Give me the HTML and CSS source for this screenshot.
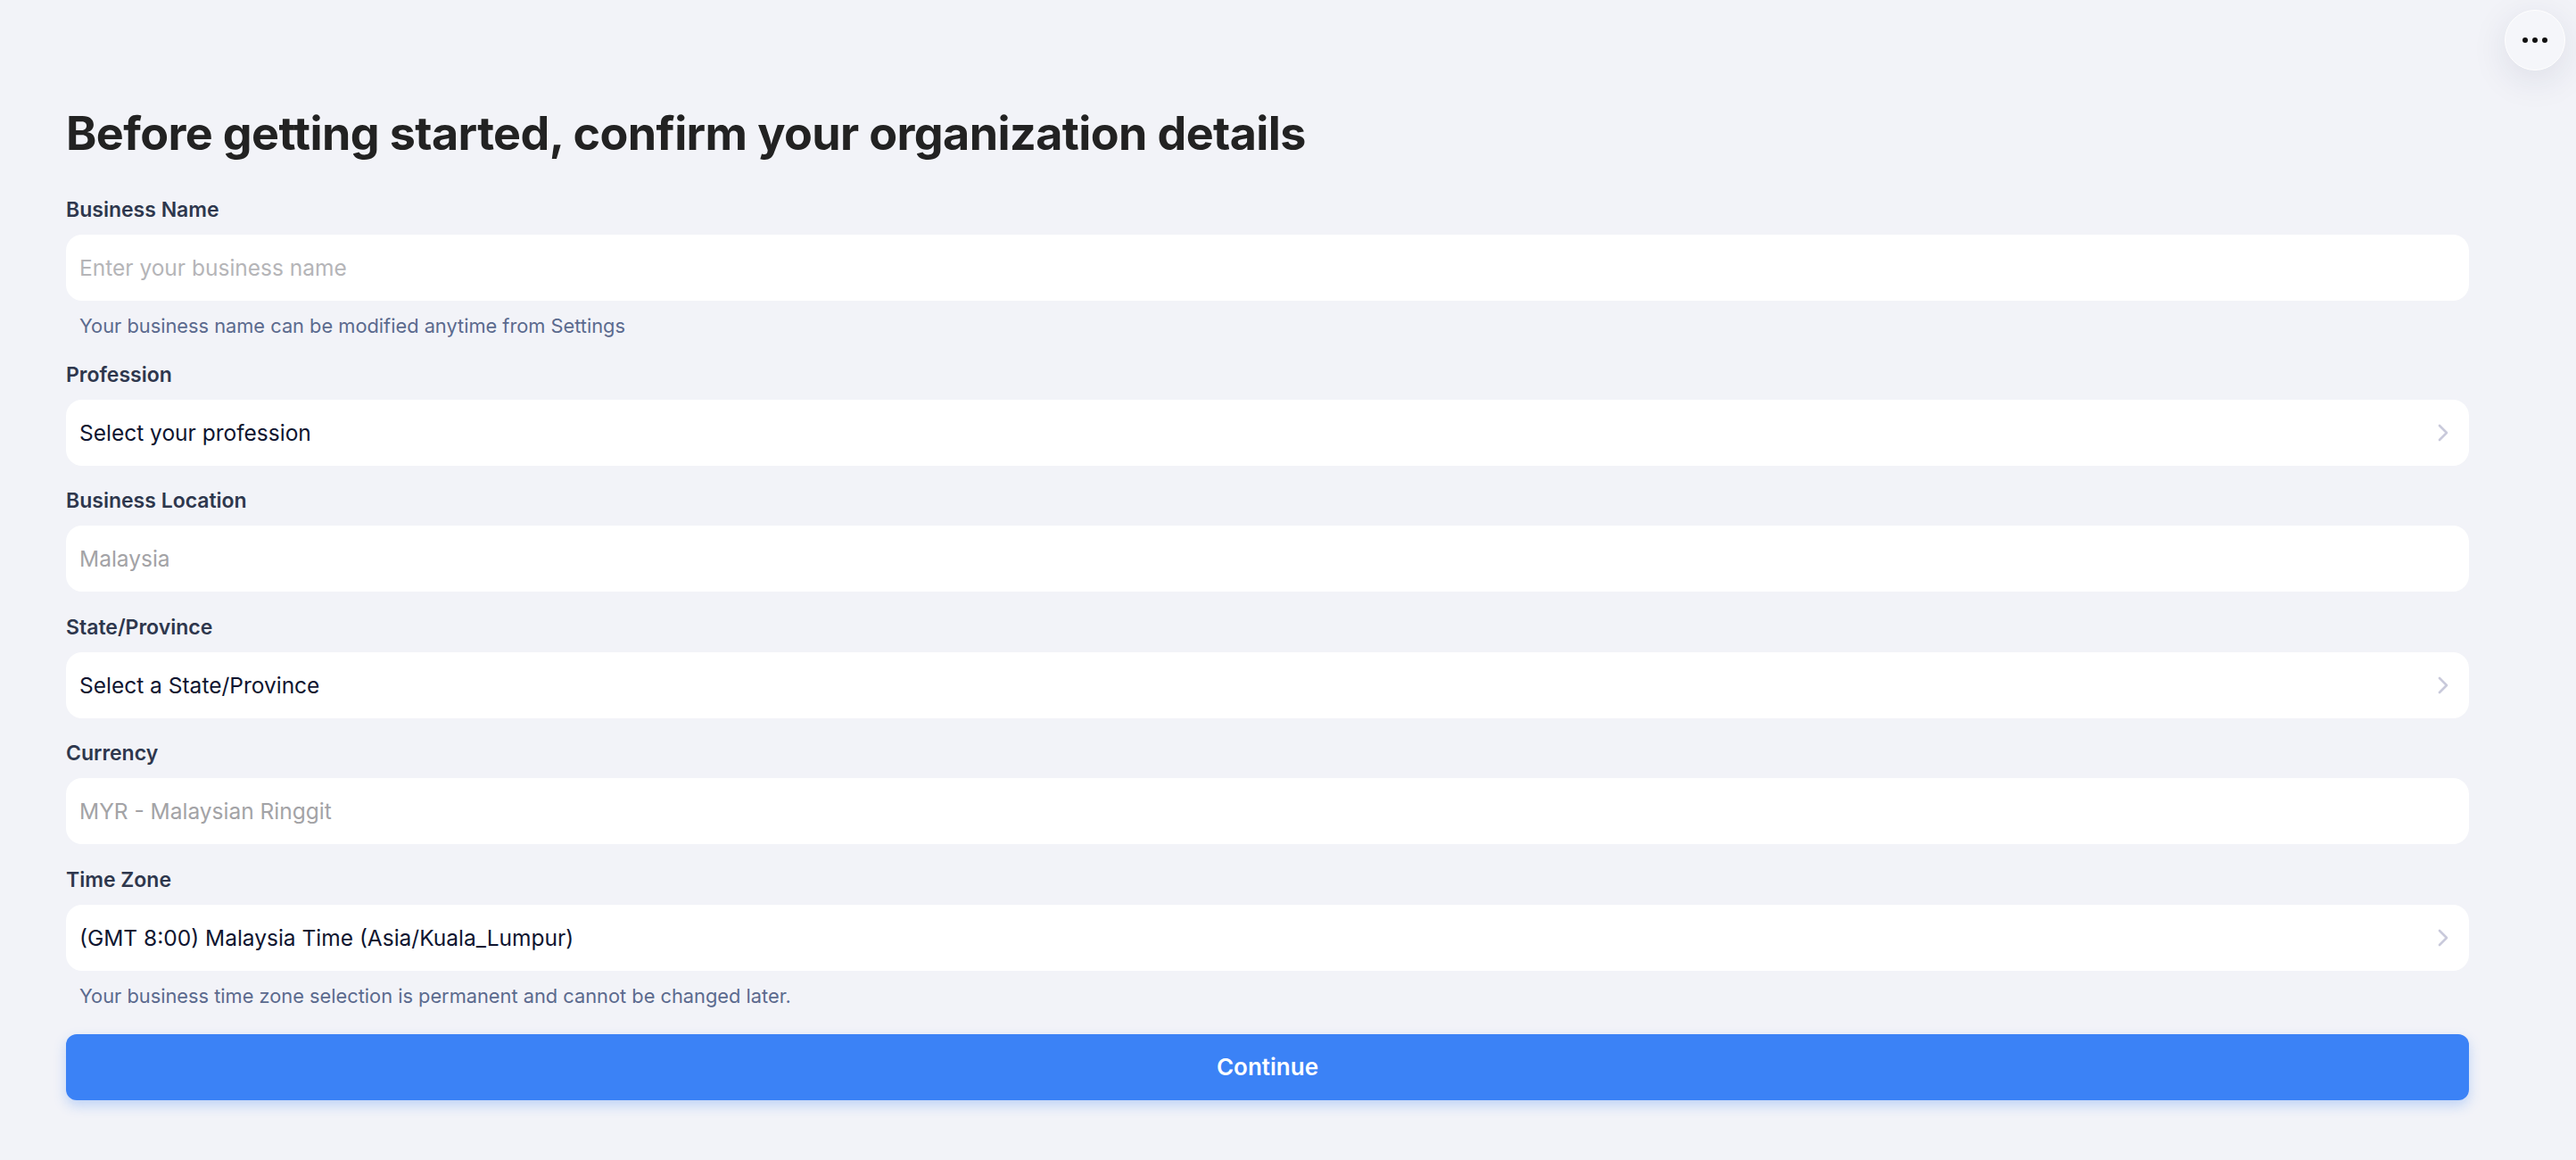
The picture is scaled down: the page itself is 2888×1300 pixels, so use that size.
FILE: index.html
```html
<!DOCTYPE html>
<html lang="en">
<head>
    <meta charset="UTF-8">
    <meta name="viewport" content="width=device-width, initial-scale=1.0">
    <title>Organization Details</title>
    <link rel="stylesheet" href="styles.css">
</head>
<body>
<button class="more-button" type="button" aria-label="More options">
    <span class="dot"></span><span class="dot"></span><span class="dot"></span>
</button>

<main class="page">
    <h1>Before getting started, confirm your organization details</h1>

    <form class="org-form">
        <!-- Business name -->
        <div class="field">
            <label class="field-label" for="businessName">Business Name</label>
            <div class="field-box">
                <input class="field-input" id="businessName" type="text" placeholder="Enter your business name">
            </div>
            <p class="field-hint">Your business name can be modified anytime from Settings</p>
        </div>

        <div class="field">
            <span class="field-label">Profession</span>
            <div class="field-box select">
                <span class="field-value">Select your profession</span>
                <svg class="chevron" viewBox="0 0 12 20" width="12" height="20"><path d="M2 2l8 8-8 8"/></svg>
            </div>
        </div>

        <div class="field">
            <span class="field-label">Business Location</span>
            <div class="field-box">
                <span class="field-value muted">Malaysia</span>
            </div>
        </div>

        <div class="field">
            <span class="field-label">State/Province</span>
            <div class="field-box select">
                <span class="field-value">Select a State/Province</span>
                <svg class="chevron" viewBox="0 0 12 20" width="12" height="20"><path d="M2 2l8 8-8 8"/></svg>
            </div>
        </div>

        <div class="field">
            <span class="field-label">Currency</span>
            <div class="field-box">
                <span class="field-value muted">MYR - Malaysian Ringgit</span>
            </div>
        </div>

        <!-- Time zone is locked after setup -->
        <div class="field">
            <span class="field-label">Time Zone</span>
            <div class="field-box select">
                <span class="field-value">(GMT 8:00) Malaysia Time (Asia/Kuala_Lumpur)</span>
                <svg class="chevron" viewBox="0 0 12 20" width="12" height="20"><path d="M2 2l8 8-8 8"/></svg>
            </div>
            <p class="field-hint">Your business time zone selection is permanent and cannot be changed later.</p>
        </div>

        <button class="continue-button" type="button">Continue</button>
    </form>
</main>
</body>
</html>
```

FILE: styles.css
```css
body {
    margin: 0;
    background: #f2f3f8;
    font-family: Inter, "Noto Sans", sans-serif;
    color: #111827;
}

.page {
    padding: 118px 120px 40px 74px;
}

h1 {
    margin: 0 0 38px;
    font-size: 52px;
    line-height: 64px;
    font-weight: 700;
    letter-spacing: -0.6px;
    color: #222222;
}

.org-form {
    display: flex;
    flex-direction: column;
    gap: 24.5px;
}

.field {
    display: flex;
    flex-direction: column;
}

.field-label {
    font-size: 23px;
    line-height: 30px;
    font-weight: 600;
    color: #2e374d;
    margin-bottom: 13px;
}

.field-box {
    display: flex;
    align-items: center;
    justify-content: space-between;
    height: 74px;
    box-sizing: border-box;
    padding: 0 23px 0 15px;
    background: #ffffff;
    border-radius: 18px;
}

.field-input {
    flex: 1;
    border: 0;
    outline: 0;
    padding: 0;
    background: transparent;
    font-family: inherit;
    font-size: 24.5px;
    color: #111827;
    caret-color: #f0c36d;
}

.field-input::placeholder {
    color: #b5b5b8;
}

.field-value {
    font-size: 24.5px;
    color: #0f1530;
}

.field-value.muted {
    color: #a3a3a6;
}

.chevron {
    fill: none;
    stroke: #c9cadb;
    stroke-width: 2.6;
    stroke-linecap: round;
    stroke-linejoin: round;
}

.field-hint {
    margin: 14px 0 0 15px;
    font-size: 21.8px;
    line-height: 29px;
    color: #5b6a8e;
}

.continue-button {
    margin-top: 3.5px;
    height: 74px;
    border: 0;
    border-radius: 12px;
    background: #3b82f6;
    color: #ffffff;
    font-family: inherit;
    font-size: 26px;
    font-weight: 600;
    box-shadow: 0 6px 14px rgba(59, 130, 246, 0.28);
    cursor: pointer;
}

.more-button {
    position: absolute;
    top: 11px;
    right: 12px;
    width: 68px;
    height: 68px;
    display: flex;
    align-items: center;
    justify-content: center;
    gap: 5px;
    padding: 0;
    border: 1px solid #ffffff;
    border-radius: 50%;
    background: #f5f6fa;
    box-shadow: 0 10px 40px rgba(30, 40, 80, 0.10);
    cursor: pointer;
}

.dot {
    width: 6px;
    height: 6px;
    border-radius: 50%;
    background: #111111;
}
```
